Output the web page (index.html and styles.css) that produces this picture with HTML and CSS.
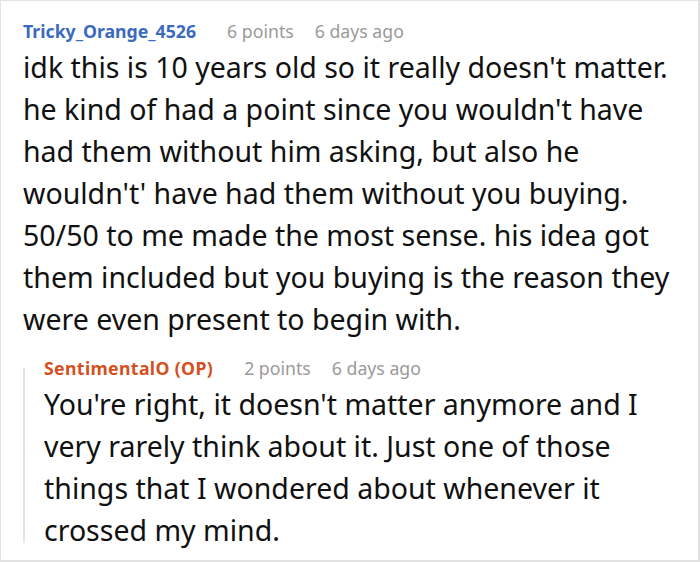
FILE: index.html
```html
<!DOCTYPE html>
<html>
<head>
<meta charset="utf-8">
<link rel="stylesheet" href="styles.css">
</head>
<body>
<div class="frame">
  <div class="comment">
    <div class="meta">
      <span class="user blue">Tricky_Orange_4526</span>
      <span class="info points">6 points</span>
      <span class="info">6 days ago</span>
    </div>
    <p class="body">idk this is 10 years old so it really doesn't matter. he kind of had a point since you wouldn't have had them without him asking, but also he wouldn't' have had them without you buying. 50/50 to me made the most sense. his idea got them included but you buying is the reason they were even present to begin with.</p>
    <div class="reply">
      <div class="meta">
        <span class="user orange">SentimentalO (OP)</span>
        <span class="info points">2 points</span>
        <span class="info">6 days ago</span>
      </div>
      <p class="body">You're right, it doesn't matter anymore and I very rarely think about it. Just one of those things that I wondered about whenever it crossed my mind.</p>
    </div>
  </div>
</div>
</body>
</html>
```
FILE: styles.css
```css
html, body {
  margin: 0;
  padding: 0;
  background: #fff;
}
.frame {
  width: 700px;
  height: 562px;
  box-sizing: border-box;
  border: 1px solid #e2e2e2;
  border-bottom-width: 2px;
  border-right-width: 2px;
  overflow: hidden;
  font-family: "Noto Sans", "Open Sans", sans-serif;
}
.comment {
  padding: 18px 20px 0 22px;
}
.meta {
  display: flex;
  font-size: 17.7px;
  line-height: 24px;
}
.user {
  font-weight: 700;
  margin-right: 31px;
}
.points {
  margin-right: 21px;
}
.blue { color: #3b6ac0; }
.orange {
  color: #d4511f;
  letter-spacing: 0.35px;
}
.info { color: #9a9a9a; }
.body {
  margin: 3px 0 0 0;
  font-size: 28.5px;
  line-height: 42px;
  color: #111;
}
.reply {
  position: relative;
  margin-top: 16px;
  padding-left: 21px;
}
.reply::before {
  content: "";
  position: absolute;
  left: 0;
  top: 12px;
  bottom: 8px;
  width: 2px;
  background: #e4e4e4;
}
```
